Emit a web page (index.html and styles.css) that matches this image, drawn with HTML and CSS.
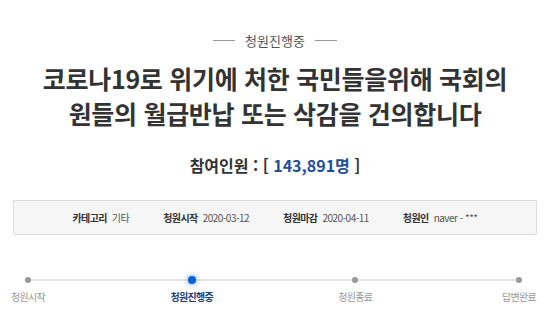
FILE: index.html
```html
<!DOCTYPE html>
<html lang="ko">
<head>
<meta charset="utf-8">
<link rel="stylesheet" href="styles.css">
</head>
<body>
<div class="page">
  <div class="status"><span class="rule"></span><span class="status-text">청원진행중</span><span class="rule"></span></div>
  <h1 class="title">코로나19로 위기에 처한 국민들을위해 국회의<br>원들의 월급반납 또는 삭감을 건의합니다</h1>
  <div class="count">참여인원 : [ <span class="num">143,891명</span> ]</div>
  <div class="info">
    <div class="item"><span class="k">카테고리</span><span class="v">기타</span></div>
    <div class="item"><span class="k">청원시작</span><span class="v">2020-03-12</span></div>
    <div class="item"><span class="k">청원마감</span><span class="v">2020-04-11</span></div>
    <div class="item"><span class="k">청원인</span><span class="v">naver - ***</span></div>
  </div>
  <div class="timeline">
    <div class="track"></div>
    <div class="steps">
      <div class="step"><span class="dot"></span><span class="lbl">청원시작</span></div>
      <div class="step active"><span class="dot"></span><span class="lbl">청원진행중</span></div>
      <div class="step"><span class="dot"></span><span class="lbl">청원종료</span></div>
      <div class="step"><span class="dot"></span><span class="lbl">답변완료</span></div>
    </div>
  </div>
</div>
</body>
</html>
```

FILE: styles.css
```css
* { box-sizing: border-box; }
html, body { margin: 0; padding: 0; background: #fff; }
body { font-family: "Noto Sans CJK KR", "Noto Sans", sans-serif; color: #333; }
.page { width: 550px; padding: 30px 13px 0; }
.status { display: flex; justify-content: center; align-items: center; gap: 10px; height: 20px; }
.rule { width: 22px; height: 1px; background: #999; }
.status-text { font-size: 13px; color: #555; }
.title { margin: 11px 0 0; text-align: center; font-size: 25px; line-height: 35px; font-weight: 700; color: #333; letter-spacing: -0.3px; }
.count { margin-top: 22px; text-align: center; font-size: 16px; font-weight: 700; color: #333; line-height: 24px; }
.num { color: #1f4e9c; }
.info { margin-top: 23px; height: 35px; border: 1px solid #dcdcdc; border-radius: 2px; background: #f6f6f6; display: flex; justify-content: center; align-items: center; gap: 34px; font-size: 10px; }
.item { display: flex; gap: 5px; align-items: center; }
.k { font-weight: 700; color: #333; letter-spacing: -0.6px; }
.v { color: #555; letter-spacing: -0.5px; }
.timeline { position: relative; margin-top: 38px; }
.track { position: absolute; left: 15px; right: 18px; top: 6px; height: 2px; background: #e8e8e8; }
.steps { position: relative; display: flex; justify-content: space-between; padding-right: 3px; }
.step { width: 30px; display: flex; flex-direction: column; align-items: center; gap: 6px; }
.dot { width: 6px; height: 6px; margin-top: 4px; border-radius: 50%; background: #999; }
.step.active .dot { width: 8px; height: 8px; margin-top: 3px; margin-bottom: -1px; background: #0b63d6; box-shadow: 0 0 4px 2px rgba(11,99,214,0.3); }
.lbl { font-size: 10px; color: #999; line-height: 16px; white-space: nowrap; letter-spacing: -0.7px; }
.step.active .lbl { color: #1f3e7a; font-weight: 700; }
```
